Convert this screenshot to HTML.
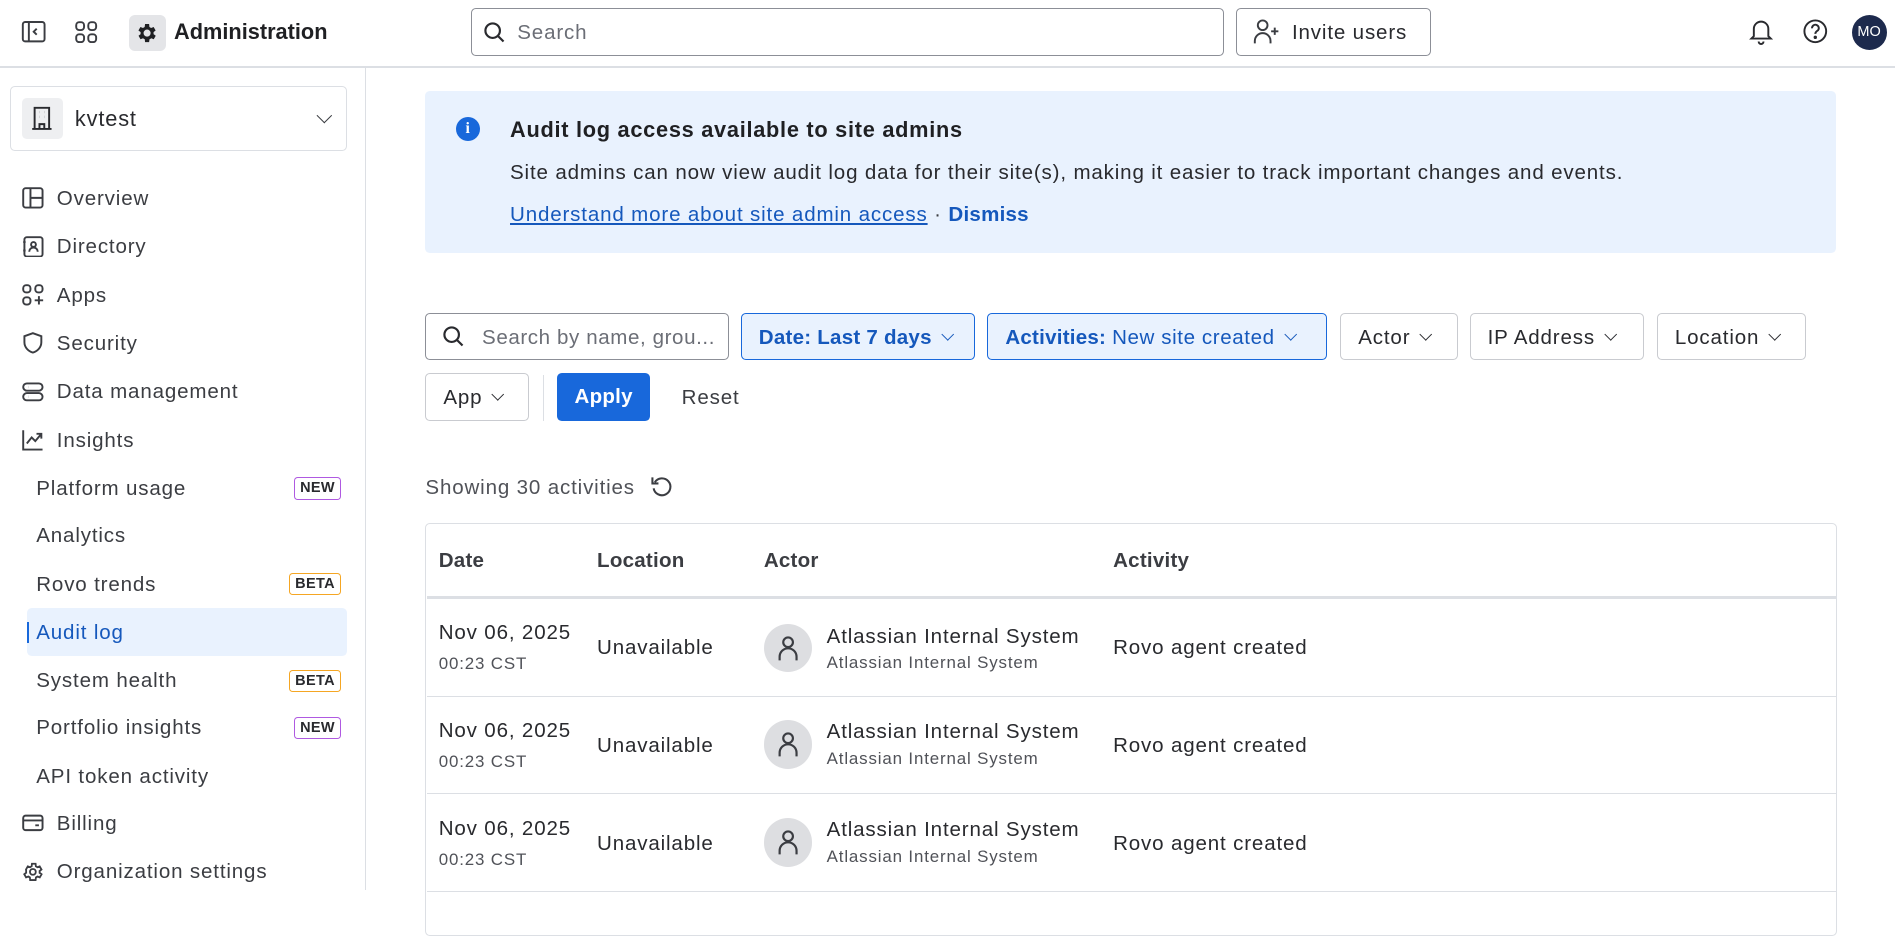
<!DOCTYPE html>
<html><head><meta charset="utf-8"><style>
html{zoom:1.2086}
body{margin:0;width:1568px;height:735px;overflow:hidden;font-family:"Liberation Sans",sans-serif;color:#292a2e;background:#fff;position:relative;letter-spacing:0.7px}
b,.nb{letter-spacing:0.2px}
.a{position:absolute;white-space:nowrap}
svg{display:block}
.nav{position:absolute;left:0;font-size:17px;color:#3b3d42;height:40px;line-height:42px;white-space:nowrap}
.nav svg{position:absolute;left:18px;top:11px}
.badge{position:absolute;right:20px;top:11px;font-size:12px;font-weight:bold;padding:0 4px;height:17px;line-height:17px;border-radius:3px;color:#292a2e;letter-spacing:0.3px}
.new{border:1px solid #af59e1}
.beta{border:1px solid #f5a623}
.btn{position:absolute;border:1px solid #c9cbd0;border-radius:4px;font-size:17px;line-height:39px;box-sizing:border-box;height:39px;padding-left:14px;color:#292a2e;white-space:nowrap;overflow:hidden}
.sel{background:#e9f2fe;border-color:#1868db;color:#1558bc;font-weight:bold;letter-spacing:0.2px}
.chev{display:inline-block;width:7px;height:7px;border-right:1.5px solid currentColor;border-bottom:1.5px solid currentColor;transform:rotate(45deg);margin-left:9px;position:relative;top:-4px}
.th{position:absolute;top:454px;font-size:17px;font-weight:bold;color:#3b3d42;letter-spacing:0.2px}
.row{position:absolute;left:353px;width:1166px;height:80px;border-bottom:1px solid #dcdfe4;font-size:17px}
.row div{position:absolute;white-space:nowrap}
</style></head><body>
<!-- header -->
<div class="a" style="left:0;top:55px;width:1568px;height:1px;background:#dcdfe4"></div>
<svg class="a" style="left:17px;top:16px" width="21" height="21" viewBox="0 0 21 21"><rect x="1.5" y="2.5" width="18" height="16" rx="2" fill="none" stroke="#3b3d42" stroke-width="1.6"/><line x1="6.5" y1="3" x2="6.5" y2="18" stroke="#3b3d42" stroke-width="1.6"/><path d="M13 8l-2.5 2.5L13 13" fill="none" stroke="#3b3d42" stroke-width="1.6"/></svg>
<svg class="a" style="left:62px;top:17px" width="19" height="19" viewBox="0 0 19 19" fill="none" stroke="#3b3d42" stroke-width="1.6"><rect x="1" y="1" width="6.5" height="6.5" rx="2.5"/><rect x="11" y="1" width="6.5" height="6.5" rx="2.5"/><rect x="1" y="11" width="6.5" height="6.5" rx="2.5"/><rect x="11" y="11" width="6.5" height="6.5" rx="2.5"/></svg>
<div class="a" style="left:107px;top:12px;width:30px;height:30px;border-radius:5px;background:#e4e5e8"></div>
<svg class="a" style="left:112px;top:17px" width="20" height="20" viewBox="0 0 24 24"><path fill="#1f2023" d="M19.4 13a7.5 7.5 0 000-2l2.1-1.6-2-3.5-2.5 1a7 7 0 00-1.7-1L15 3h-4l-.4 2.9a7 7 0 00-1.7 1l-2.5-1-2 3.5L6.6 11a7.5 7.5 0 000 2l-2.1 1.6 2 3.5 2.5-1a7 7 0 001.7 1L11 21h4l.4-2.9a7 7 0 001.7-1l2.5 1 2-3.5zM13 15.5a3.5 3.5 0 110-7 3.5 3.5 0 010 7z" transform="translate(-1 0)"/></svg>
<div class="a" style="left:144px;top:16px;font-size:18px;font-weight:bold;color:#1f2023;letter-spacing:0">Administration</div>
<div class="a" style="left:390px;top:7px;width:623px;height:39px;border:1px solid #8c8f97;border-radius:4px;box-sizing:border-box"></div>
<svg class="a" style="left:400px;top:17px" width="19" height="19" viewBox="0 0 19 19" fill="none" stroke="#292a2e" stroke-width="1.8"><circle cx="8" cy="8" r="6"/><line x1="12.5" y1="12.5" x2="17" y2="17"/></svg>
<div class="a" style="left:428px;top:17px;font-size:17px;color:#6b6e76">Search</div>
<div class="a" style="left:1023px;top:7px;width:161px;height:39px;border:1px solid #8c8f97;border-radius:4px;box-sizing:border-box"></div>
<svg class="a" style="left:1037px;top:15px" width="24" height="22" viewBox="0 0 24 22" fill="none" stroke="#3b3d42" stroke-width="1.6"><circle cx="8" cy="6" r="4"/><path d="M1.5 21v-2a6.5 6.5 0 0113 0v2"/><path d="M18 8v6M15 11h6"/></svg>
<div class="a" style="left:1069px;top:17px;font-size:17px;color:#292a2e">Invite users</div>
<svg class="a" style="left:1447px;top:15px" width="20" height="22" viewBox="0 0 20 22" fill="none" stroke="#292a2e" stroke-width="1.6"><path d="M4 15V9a6 6 0 0112 0v6l2 2H2z"/><path d="M8 19.5a2 2 0 004 0"/></svg>
<svg class="a" style="left:1491px;top:15px" width="22" height="22" viewBox="0 0 22 22" fill="none" stroke="#292a2e" stroke-width="1.6"><circle cx="11" cy="11" r="9"/><path d="M8.3 8.5a2.8 2.8 0 115 1.6c-1 .8-2.3 1.3-2.3 3"/><circle cx="11" cy="16" r=".6" fill="#292a2e"/></svg>
<div class="a" style="left:1532px;top:12px;width:29px;height:29px;border-radius:50%;background:#1d2a4d;color:#fff;font-size:12px;line-height:29px;text-align:center;letter-spacing:0">MO</div>
<!-- sidebar -->
<div class="a" style="left:302px;top:56px;width:1px;height:680px;background:#dcdfe4"></div>
<div class="a" style="left:8px;top:71px;width:279px;height:54px;border:1px solid #dcdfe4;border-radius:4px;box-sizing:border-box"></div>
<div class="a" style="left:18px;top:81px;width:34px;height:34px;border-radius:4px;background:#eeeff1"></div>
<svg class="a" style="left:26px;top:88px" width="18" height="20" viewBox="0 0 18 20" fill="none" stroke="#292a2e" stroke-width="1.6"><path d="M3 19V1.5h12V19M1 19h16"/><path d="M7 19v-4h4v4"/><path d="M7 5h.1M11 5h.1M7 9h.1M11 9h.1" stroke-width="2"/></svg>
<div class="a" style="left:62px;top:88px;font-size:18px">kvtest</div>
<div class="a" style="left:255px;top:91px;color:#3b3d42"><span class="chev" style="width:8px;height:8px"></span></div>

<div class="nav" style="top:144px"><svg width="18" height="18" viewBox="0 0 18 18" fill="none" stroke="#3b3d42" stroke-width="1.6"><rect x="1" y="1" width="16" height="16" rx="2"/><path d="M7 1v16M7 9h10"/></svg><span style="margin-left:47px">Overview</span></div>
<div class="nav" style="top:184px"><svg width="18" height="18" viewBox="0 0 18 18" fill="none" stroke="#3b3d42" stroke-width="1.6"><rect x="2" y="1" width="15" height="16" rx="2"/><circle cx="9.5" cy="7" r="2"/><path d="M6 13a3.5 3.5 0 017 0M1 5h2M1 12h2"/></svg><span style="margin-left:47px">Directory</span></div>
<div class="nav" style="top:224px"><svg width="18" height="18" viewBox="0 0 18 18" fill="none" stroke="#3b3d42" stroke-width="1.6"><rect x="1" y="1" width="6" height="6" rx="2.5"/><rect x="11" y="1" width="6" height="6" rx="2.5"/><rect x="1" y="11" width="6" height="6" rx="2.5"/><path d="M14 10v7M10.5 13.5h7"/></svg><span style="margin-left:47px">Apps</span></div>
<div class="nav" style="top:264px"><svg width="18" height="18" viewBox="0 0 18 18" fill="none" stroke="#3b3d42" stroke-width="1.6"><path d="M9 1l7 2.5v5c0 4.5-3.5 7.5-7 8.5-3.5-1-7-4-7-8.5v-5z"/></svg><span style="margin-left:47px">Security</span></div>
<div class="nav" style="top:304px"><svg width="18" height="18" viewBox="0 0 18 18" fill="none" stroke="#3b3d42" stroke-width="1.6"><rect x="1" y="2" width="16" height="6" rx="3"/><rect x="1" y="10" width="16" height="6" rx="3"/><path d="M5 5h.1M5 13h.1" stroke-width="2"/></svg><span style="margin-left:47px">Data management</span></div>
<div class="nav" style="top:344px"><svg width="18" height="18" viewBox="0 0 18 18" fill="none" stroke="#3b3d42" stroke-width="1.6"><path d="M1 1v16h16"/><path d="M4 12l4-5 3 3 5-6M12 4h4v4"/></svg><span style="margin-left:47px">Insights</span></div>
<div class="nav" style="top:384px;width:302px"><span style="margin-left:30px">Platform usage</span><span class="badge new">NEW</span></div>
<div class="nav" style="top:423px"><span style="margin-left:30px">Analytics</span></div>
<div class="nav" style="top:463px;width:302px"><span style="margin-left:30px">Rovo trends</span><span class="badge beta">BETA</span></div>
<div class="a" style="left:22px;top:503px;width:265px;height:40px;background:#e9f2fe;border-radius:4px"></div>
<div class="a" style="left:22px;top:515px;width:2px;height:17px;background:#1868db"></div>
<div class="nav" style="top:503px;color:#1558bc"><span style="margin-left:30px">Audit log</span></div>
<div class="nav" style="top:543px;width:302px"><span style="margin-left:30px">System health</span><span class="badge beta">BETA</span></div>
<div class="nav" style="top:582px;width:302px"><span style="margin-left:30px">Portfolio insights</span><span class="badge new">NEW</span></div>
<div class="nav" style="top:622px"><span style="margin-left:30px">API token activity</span></div>
<div class="nav" style="top:661px"><svg width="18" height="18" viewBox="0 0 18 18" fill="none" stroke="#3b3d42" stroke-width="1.6"><rect x="1" y="3" width="16" height="12" rx="2"/><path d="M1 7h16M11 11h3"/></svg><span style="margin-left:47px">Billing</span></div>
<div class="nav" style="top:701px"><svg width="18" height="18" viewBox="0 0 24 24" fill="none" stroke="#3b3d42" stroke-width="2"><circle cx="12" cy="12" r="3.2"/><path d="M19.4 13a7.5 7.5 0 000-2l2.1-1.6-2-3.5-2.5 1a7 7 0 00-1.7-1L15 3h-4l-.4 2.9a7 7 0 00-1.7 1l-2.5-1-2 3.5L4.6 11a7.5 7.5 0 000 2l-2.1 1.6 2 3.5 2.5-1a7 7 0 001.7 1L9 21h6l.4-2.9a7 7 0 001.7-1l2.5 1 2-3.5z"/></svg><span style="margin-left:47px">Organization settings</span></div>
<!-- banner -->
<div class="a" style="left:352px;top:75px;width:1167px;height:134px;background:#e9f2fe;border-radius:4px"></div>
<div class="a" style="left:377px;top:97px;width:20px;height:20px;border-radius:50%;background:#1868db;color:#fff;font-size:13px;font-weight:bold;text-align:center;line-height:20px;font-family:'Liberation Serif',serif;letter-spacing:0">i</div>
<div class="a" style="left:422px;top:97px;font-size:18px;font-weight:bold;color:#1f2023;letter-spacing:0.6px">Audit log access available to site admins</div>
<div class="a" style="left:422px;top:133px;font-size:17px;color:#292a2e">Site admins can now view audit log data for their site(s), making it easier to track important changes and events.</div>
<div class="a" style="left:422px;top:168px;font-size:17px;color:#1558bc"><span style="text-decoration:underline">Understand more about site admin access</span><span style="color:#3b3d42"> · </span><b>Dismiss</b></div>
<!-- filters -->
<div class="btn" style="left:352px;top:259px;width:251px;border-color:#8c8f97;padding-left:46px;color:#6b6e76;letter-spacing:0.5px">Search by name, grou...</div>
<svg class="a" style="left:366px;top:269px" width="19" height="19" viewBox="0 0 19 19" fill="none" stroke="#292a2e" stroke-width="1.8"><circle cx="8" cy="8" r="6"/><line x1="12.5" y1="12.5" x2="17" y2="17"/></svg>
<div class="btn sel" style="left:613px;top:259px;width:194px">Date: Last 7 days<span class="chev"></span></div>
<div class="btn sel" style="left:817px;top:259px;width:281px">Activities: <span style="font-weight:normal;letter-spacing:0.5px">New site created</span><span class="chev"></span></div>
<div class="btn" style="left:1109px;top:259px;width:97px">Actor<span class="chev"></span></div>
<div class="btn" style="left:1216px;top:259px;width:144px">IP Address<span class="chev"></span></div>
<div class="btn" style="left:1371px;top:259px;width:123px">Location<span class="chev"></span></div>
<div class="btn" style="left:352px;top:309px;width:86px">App<span class="chev"></span></div>
<div class="a" style="left:449px;top:310px;width:1px;height:38px;background:#dcdfe4"></div>
<div class="a" style="left:461px;top:309px;width:77px;height:39px;background:#1868db;border-radius:4px;color:#fff;font-size:17px;font-weight:bold;line-height:40px;text-align:center;letter-spacing:0.2px">Apply</div>
<div class="a" style="left:564px;top:319px;font-size:17px;color:#3b3d42">Reset</div>
<div class="a" style="left:352px;top:394px;font-size:17px;color:#505258">Showing 30 activities</div>
<svg class="a" style="left:538px;top:393px" width="19" height="19" viewBox="0 0 19 19" fill="none" stroke="#3b3d42" stroke-width="1.7"><path d="M4 6a7 7 0 11-1 5"/><path d="M2 2v5h5"/></svg>
<!-- table -->
<div class="a" style="left:352px;top:433px;width:1166px;height:340px;border:1px solid #dcdfe4;border-radius:4px"></div>
<div class="a" style="left:353px;top:493px;width:1166px;height:3px;background:#dcdfe4"></div>
<div class="th" style="left:363px">Date</div><div class="th" style="left:494px">Location</div><div class="th" style="left:632px">Actor</div><div class="th" style="left:921px">Activity</div>
<div class="row" style="top:496px"><div style="left:10px;top:18px">Nov 06, 2025</div><div style="left:10px;top:45px;font-size:14px;color:#505258">00:23 CST</div><div style="left:141px;top:30px">Unavailable</div><div style="left:279px;top:20px;width:40px;height:40px;border-radius:50%;background:#dddee1"><svg style="margin:9px 0 0 10px" width="20" height="22" viewBox="0 0 20 22" fill="none" stroke="#3b3d42" stroke-width="1.8"><circle cx="10" cy="6" r="4"/><path d="M3 21v-3a7 7 0 0114 0v3"/></svg></div><div style="left:331px;top:21px">Atlassian Internal System</div><div style="left:331px;top:44px;font-size:14px;color:#505258">Atlassian Internal System</div><div style="left:568px;top:30px">Rovo agent created</div></div>
<div class="row" style="top:576px"><div style="left:10px;top:19px">Nov 06, 2025</div><div style="left:10px;top:46px;font-size:14px;color:#505258">00:23 CST</div><div style="left:141px;top:31px">Unavailable</div><div style="left:279px;top:20px;width:40px;height:40px;border-radius:50%;background:#dddee1"><svg style="margin:9px 0 0 10px" width="20" height="22" viewBox="0 0 20 22" fill="none" stroke="#3b3d42" stroke-width="1.8"><circle cx="10" cy="6" r="4"/><path d="M3 21v-3a7 7 0 0114 0v3"/></svg></div><div style="left:331px;top:20px">Atlassian Internal System</div><div style="left:331px;top:44px;font-size:14px;color:#505258">Atlassian Internal System</div><div style="left:568px;top:31px">Rovo agent created</div></div>
<div class="row" style="top:657px"><div style="left:10px;top:19px">Nov 06, 2025</div><div style="left:10px;top:46px;font-size:14px;color:#505258">00:23 CST</div><div style="left:141px;top:31px">Unavailable</div><div style="left:279px;top:20px;width:40px;height:40px;border-radius:50%;background:#dddee1"><svg style="margin:9px 0 0 10px" width="20" height="22" viewBox="0 0 20 22" fill="none" stroke="#3b3d42" stroke-width="1.8"><circle cx="10" cy="6" r="4"/><path d="M3 21v-3a7 7 0 0114 0v3"/></svg></div><div style="left:331px;top:20px">Atlassian Internal System</div><div style="left:331px;top:44px;font-size:14px;color:#505258">Atlassian Internal System</div><div style="left:568px;top:31px">Rovo agent created</div></div>
</body></html>
